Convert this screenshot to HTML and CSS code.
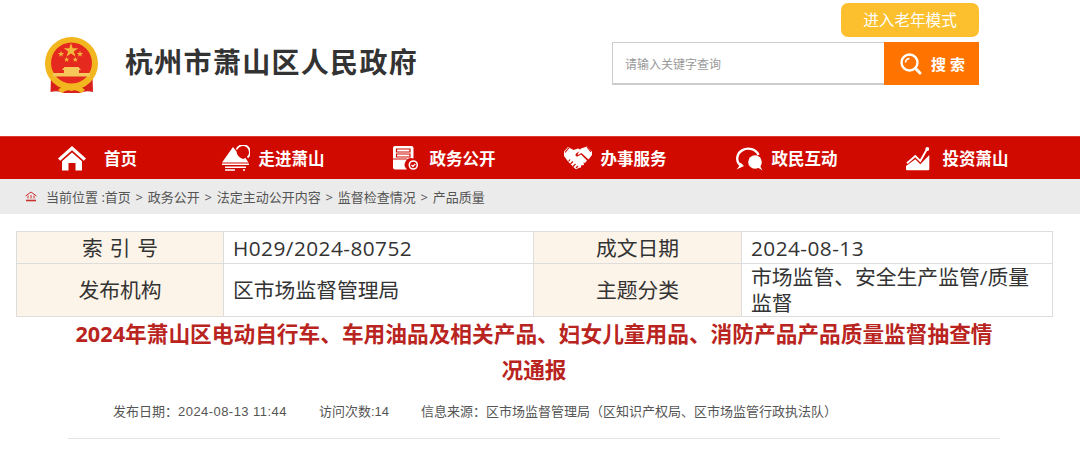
FILE: index.html
```html
<!DOCTYPE html>
<html lang="zh-CN">
<head>
<meta charset="utf-8">
<title>杭州市萧山区人民政府</title>
<link rel="stylesheet" href="styles.css">
</head>
<body>
<header class="top">
  <div class="brand">
    <svg class="emblem" width="54" height="58" viewBox="0 0 54 58">
      <path d="M6 38 L5.500 55 Q13 53 19 56 L35 56 Q41 53 48 55 L47.500 38 Z" fill="#d8201c"/>
      <circle cx="26.500" cy="26.500" r="26.500" fill="#f2b71f"/>
      <circle cx="26.500" cy="26" r="20.500" fill="#e5291f"/>
      <path d="M26 6l1.700 5.200h5.500l-4.400 3.200 1.700 5.200-4.500-3.200-4.500 3.200 1.700-5.200-4.400-3.200h5.500z" fill="#f2b93a"/>
      <path d="M16 13.800l.8 2.200h2.400l-1.900 1.400.7 2.300-2-1.400-2 1.400.7-2.300-1.900-1.400h2.400zM35 13.800l.8 2.200h2.400l-1.900 1.400.7 2.300-2-1.400-2 1.400.7-2.300-1.900-1.400h2.400zM21.700 19.800l.7 1.900h2l-1.600 1.200.6 2-1.700-1.200-1.700 1.200.6-2-1.600-1.200h2zM30.300 19.800l.7 1.900h2l-1.600 1.200.6 2-1.700-1.200-1.700 1.200.6-2-1.600-1.200h2z" fill="#f2b93a"/>
      <path d="M19.500 30h14l2.500 3h-19zM19 33h15v3h-15zM8 36h37v3.500h-37z" fill="#f6c85a"/>
      <path d="M7 39.500 Q16 47 26.500 47 Q37 47 46 39.500 L46 43 Q37 51 26.500 50 Q16 51 7 43Z" fill="#f2b71f"/>
      <path d="M13 53 Q19 47 26.500 50 Q34 47 40 53 L36 56 Q31 52 26.500 54 Q22 52 17 56Z" fill="#f2b71f"/>
    </svg>
    <h1 class="site-name">杭州市萧山区人民政府</h1>
  </div>
  <div class="tools">
    <a class="elder">进入老年模式</a>
    <form class="search">
      <span class="search-input">请输入关键字查询</span>
      <span class="search-btn">
        <svg width="24" height="24" viewBox="0 0 24 24" fill="none" stroke="#fff" stroke-linecap="round">
          <circle cx="10.500" cy="10.500" r="8" stroke-width="2.400"/>
          <path d="M16.500 16.500L21 21" stroke-width="3"/>
          <path d="M6.500 10a4.500 4.500 0 0 1 3.500-3.500" stroke-width="1.400"/>
        </svg>
        <b>搜 索</b>
      </span>
    </form>
  </div>
</header>

<nav class="nav">
  <a class="nav-item nav-first">
    <svg class="nav-icon" width="28" height="26" viewBox="0 0 28 26" fill="#fff">
      <path d="M14 1 L28 13.500 L25.800 15.800 L14 5.300 L2.200 15.800 L0 13.500Z"/>
      <path d="M14 7.500 L24 16.300 V25.500 H17.500 V18 H10.500 V25.500 H4 V16.300Z"/>
    </svg>
    <span>首页</span>
  </a>
  <a class="nav-item">
    <svg class="nav-icon" width="28" height="26" viewBox="0 0 28 26" fill="#fff">
      <path d="M0 17.500 L11 2 L14.500 6.500 Q15 12 21 14 L23.500 13 L26.500 17.500Z"/>
      <path d="M14.500 4.500 A7 7 0 1 1 25.500 12.500" fill="none" stroke="#fff" stroke-width="1.800"/>
      <path d="M0 18.500H27V20H0ZM3 21.500H24V23H3ZM3 24.300H13V25.700H3ZM21 24.300H23V25.700H21Z"/>
    </svg>
    <span>走进萧山</span>
  </a>
  <a class="nav-item">
    <svg class="nav-icon" width="28" height="26" viewBox="0 0 28 26">
      <path d="M2 1H18.500Q20.500 1 20.500 3V13.500A6.500 6.500 0 0 0 14 24.500H2Q0 24.500 0 22.500V3Q0 1 2 1Z" fill="#fff"/>
      <path d="M3.500 4H17V7H3.500ZM3.500 9H17V12H3.500Z" fill="none" stroke="#d10a00" stroke-width="1.200"/>
      <path d="M0 14H14" stroke="#d10a00" stroke-width="1"/>
      <circle cx="20.300" cy="20" r="4" fill="none" stroke="#fff" stroke-width="1.600"/>
      <path d="M18.500 20l1.400 1.500 2.400-2.600" fill="none" stroke="#fff" stroke-width="1.200"/>
    </svg>
    <span>政务公开</span>
  </a>
  <a class="nav-item">
    <svg class="nav-icon" width="28" height="26" viewBox="0 0 28 26" fill="#fff">
      <path d="M0 6.500 L4 2 L9.500 5 L14 3.500 L17.500 5 L12 8.500 Q10.500 11.500 13.500 11.500 L17 9.500 L23 15.500 L21 18 L19.500 17.500 L20 20 L17 20.500 L17 22.500 L14.500 23 Q13 24.500 11.500 24 L4 16.500 L0 11Z"/>
      <path d="M17 3.500 L23 1.500 L28 6.500 V10 L24.500 14.500 L17.500 8 L14 10 Q13 9.500 14 8.500 Z"/>
      <path d="M6 14.500 l-1.500 2M9 16.500 l-2.500 2.500M11.500 19 l-2.500 2.500M14 21 l-2 2M4.800 2.800 L1 7.500 M23 2 L27 6.800" stroke="#d10a00" stroke-width="1.100" fill="none"/>
    </svg>
    <span>办事服务</span>
  </a>
  <a class="nav-item">
    <svg class="nav-icon" width="28" height="26" viewBox="0 0 28 26" fill="none">
      <path d="M5 20 A11 9.800 0 1 1 23.500 10" stroke="#fff" stroke-width="2.400"/>
      <path d="M6 18L9 21L1.500 24.500Q5 21 4.500 18Z" fill="#fff"/>
      <circle cx="20" cy="17" r="6.800" fill="#fff"/>
      <path d="M22 22L27.500 25.500Q25 22 25 19Z" fill="#fff"/>
    </svg>
    <span>政民互动</span>
  </a>
  <a class="nav-item">
    <svg class="nav-icon" width="28" height="26" viewBox="0 0 28 26" fill="#fff">
      <path d="M1 25.300 Q0 25.300 0 24.300 V21 L9.300 14.300 L14.300 19.300 L23.300 10 V24.300 Q23.300 25.300 22.300 25.300Z"/>
      <path d="M1 18.300 L9.300 11 L14.300 16 L20.500 5" fill="none" stroke="#fff" stroke-width="1.900"/>
      <circle cx="21.300" cy="4" r="1.900"/>
    </svg>
    <span>投资萧山</span>
  </a>
</nav>

<div class="crumbs">
  <svg width="12" height="11" viewBox="0 0 12 11" fill="none" stroke="#c9322c" stroke-width="1">
    <path d="M0.500 5L6 1L11.500 5"/>
    <path d="M3 4.500V7.500M6 4V7.500M9 4.500V7.500"/>
    <path d="M1 9.500H11" stroke-width="1.600"/>
  </svg>
  <span><span class="crumb-lead">当前位置 :</span>首页 &gt; 政务公开 &gt; 法定主动公开内容 &gt; 监督检查情况 &gt; 产品质量</span>
</div>

<main class="article">
  <table class="info">
    <colgroup>
      <col class="col-a"><col class="col-b"><col class="col-c"><col class="col-d">
    </colgroup>
    <tr class="row-short">
      <th class="spaced">索 引 号</th><td class="num">H029/2024-80752</td>
      <th>成文日期</th><td class="num">2024-08-13</td>
    </tr>
    <tr class="row-tall">
      <th>发布机构</th><td>区市场监督管理局</td>
      <th>主题分类</th><td>市场监管、安全生产监管/质量监督</td>
    </tr>
  </table>
  <h2 class="headline">2024年萧山区电动自行车、车用油品及相关产品、妇女儿童用品、消防产品产品质量监督抽查情况通报</h2>
  <p class="meta">
    <span>发布日期：<span class="meta-num">2024-08-13 11:44</span></span>
    <span>访问次数:14</span>
    <span>信息来源：区市场监督管理局（区知识产权局、区市场监管行政执法队）</span>
  </p>
  <hr class="rule">
</main>
</body>
</html>
```
FILE: styles.css
```css
* { box-sizing: border-box; }
html, body { margin: 0; padding: 0; background: #fff; overflow: hidden; }
body { font-family: "Open Sans", "Noto Sans CJK SC", sans-serif; color: #333; width: 1080px; height: 465px; }

.top { height: 136px; display: flex; justify-content: space-between; padding: 3px 101px 0 45px; }
.brand { display: flex; align-items: center; height: 120px; }
.emblem { display: block; margin-top: 5px; }
.site-name { margin: 0 0 2px 26px; font-size: 28px; letter-spacing: 1.300px; font-weight: 700; color: #333; line-height: 40px; }

.tools { display: flex; flex-direction: column; align-items: flex-end; }
.elder { width: 138px; height: 34px; background: #fcbf2e; color: #fff; border-radius: 7px; font-size: 15.600px; line-height: 34px; text-align: center; }
.search { display: flex; margin-top: 5px; width: 367px; height: 43px; }
.search-input { flex: 1; border: 1px solid #ccc; border-bottom-width: 2px; border-right: 0; padding-left: 12px; font-size: 12px; line-height: 43px; color: #999; }
.search-btn { width: 95px; background: #ff7300; color: #fff; display: flex; align-items: center; padding-left: 15px; gap: 8px; }
.search-btn b { font-size: 15px; white-space: pre; }

.nav { height: 43px; background: #d10a00; border-top: 1px solid #dc3a32; display: flex; padding-left: 16.500px; }
.nav-item { width: 171px; display: flex; align-items: center; justify-content: center; gap: 9px; color: #fff; font-size: 16.500px; font-weight: 700; }
.nav-first { gap: 18px; padding-right: 9px; }
.nav-icon { display: block; flex: none; }

.crumbs { height: 35px; background: #ebebeb; display: flex; align-items: center; gap: 9px; padding-left: 25px; font-size: 13px; color: #555; word-spacing: 1.400px; }
.crumb-lead { word-spacing: 0; }

.article { padding: 17px 28px 0 16px; }
.info { width: 1036px; border-collapse: collapse; table-layout: fixed; font-size: 20.800px; color: #333; }
.col-a { width: 207px; }
.col-b { width: 310px; }
.col-c { width: 208px; }
.col-d { width: 311px; }
.info th, .info td { border: 1px solid #ddd; padding: 0 9px; font-weight: 400; }
.row-short th, .row-short td { height: 32px; line-height: 30px; }
.row-tall th, .row-tall td { height: 53px; line-height: 26px; }
.info th { background: #fdf4e9; text-align: center; }
.info .spaced { word-spacing: 1.500px; }
.info td { text-align: left; }
.info .num { letter-spacing: .45px; }

.headline { margin: -1px 0 0 52px; width: 932px; font-size: 21.700px; line-height: 36px; font-weight: 700; color: #b92420; text-align: center; }
.meta { margin: 15px 0 0 97px; font-family: "Liberation Sans", "Noto Sans CJK SC", sans-serif; font-size: 13px; line-height: 18px; color: #555; display: flex; gap: 32px; }
.meta-num { letter-spacing: .45px; }
.rule { margin: 17px 0 0 52px; width: 932px; border: 0; border-top: 1px solid #e4e4e4; }
```
